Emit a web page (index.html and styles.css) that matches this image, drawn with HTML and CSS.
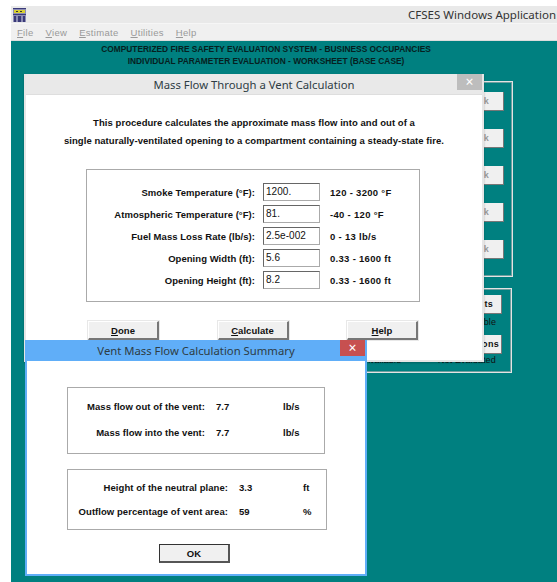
FILE: index.html
```html
<!DOCTYPE html>
<html lang="en">
<head>
<meta charset="utf-8">
<title>CFSES Windows Application</title>
<link rel="stylesheet" href="styles.css">
</head>
<body>
<div class="app">
  <header class="app-title">
    <svg class="app-icon" width="13" height="14" viewBox="0 0 13 14">
      <rect width="13" height="14" fill="#8d8db5"/>
      <rect y="0" width="13" height="1" fill="#3a3a78"/>
      <rect x="1" y="2" width="11" height="3" fill="#d8d030"/>
      <rect x="3" y="3" width="2" height="1" fill="#333"/>
      <rect x="7" y="3" width="2" height="1" fill="#333"/>
      <rect y="6" width="13" height="1" fill="#3a3a78"/>
      <rect x="1" y="8" width="2" height="6" fill="#3a3a78"/>
      <rect x="5" y="8" width="3" height="6" fill="#3a3a78"/>
      <rect x="10" y="8" width="2" height="6" fill="#3a3a78"/>
    </svg>
    <span class="app-name">CFSES Windows Application</span>
  </header>
  <nav class="menu">
    <span><u>F</u>ile</span>
    <span><u>V</u>iew</span>
    <span><u>E</u>stimate</span>
    <span><u>U</u>tilities</span>
    <span><u>H</u>elp</span>
  </nav>
  <main class="desktop">
    <div class="heading">
      <div>COMPUTERIZED FIRE SAFETY EVALUATION SYSTEM - BUSINESS OCCUPANCIES</div>
      <div>INDIVIDUAL PARAMETER EVALUATION - WORKSHEET (BASE CASE)</div>
    </div>

    <!-- worksheet panels behind the dialogs -->
    <section class="panel panel-upper">
      <div class="back-btn">Ok</div>
      <div class="back-btn">Ok</div>
      <div class="back-btn">Ok</div>
      <div class="back-btn">Ok</div>
      <div class="back-btn">Ok</div>
    </section>
    <section class="panel panel-lower">
      <div class="back-btn results-btn">Results</div>
      <div class="back-note">Available</div>
      <div class="back-btn options-btn">Options</div>
      <div class="back-status"><span>Available</span><span>Not Evaluated</span></div>
    </section>

    <!-- input dialog -->
    <section class="dialog mass">
      <div class="dlg-title">
        <span class="dlg-caption">Mass Flow Through a Vent Calculation</span>
        <span class="dlg-close">&#215;</span>
      </div>
      <div class="dlg-body">
        <p class="intro">This procedure calculates the approximate mass flow into and out of a</p>
        <p class="intro second">single naturally-ventilated opening to a compartment containing a steady-state fire.</p>
        <div class="frame inputs">
          <label>Smoke Temperature (°F):</label><span class="field">1200.</span><span>120 - 3200 °F</span>
          <label>Atmospheric Temperature (°F):</label><span class="field">81.</span><span>-40 - 120 °F</span>
          <label>Fuel Mass Loss Rate (lb/s):</label><span class="field">2.5e-002</span><span>0 - 13 lb/s</span>
          <label>Opening Width (ft):</label><span class="field">5.6</span><span>0.33 - 1600 ft</span>
          <label>Opening Height (ft):</label><span class="field">8.2</span><span>0.33 - 1600 ft</span>
        </div>
        <div class="actions">
          <button class="btn"><u>D</u>one</button>
          <button class="btn"><u>C</u>alculate</button>
          <button class="btn"><u>H</u>elp</button>
        </div>
      </div>
    </section>

    <!-- results dialog -->
    <section class="dialog summary">
      <div class="dlg-title">
        <span class="dlg-caption">Vent Mass Flow Calculation Summary</span>
        <span class="dlg-close">&#215;</span>
      </div>
      <div class="dlg-body">
        <div class="frame results flows">
          <label>Mass flow out of the vent:</label><span>7.7</span><span>lb/s</span>
          <label>Mass flow into the vent:</label><span>7.7</span><span>lb/s</span>
        </div>
        <div class="frame results plane">
          <label>Height of the neutral plane:</label><span>3.3</span><span>ft</span>
          <label>Outflow percentage of vent area:</label><span>59</span><span>%</span>
        </div>
        <button class="btn ok">OK</button>
      </div>
    </section>
  </main>
</div>
</body>
</html>
```
FILE: styles.css
```css
* { box-sizing: border-box; }

html, body { height: 100%; }

body {
  margin: 0;
  background: #fff;
  overflow: hidden;
  font-family: "Liberation Sans", Arial, sans-serif;
}

.app {
  height: 100%;
  margin-left: 11px;
  padding-top: 6px;
  display: flex;
  flex-direction: column;
}

.app-title {
  height: 18px;
  flex: none;
  display: flex;
  align-items: center;
  justify-content: space-between;
  background: #e9e9e9;
  padding: 0 0 0 2px;
  border-bottom: 1px solid #f6f6f6;
}

.app-name {
  font-family: "Noto Sans", sans-serif;
  font-size: 11.5px;
  color: #333;
  margin-right: 1px;
}

.menu {
  height: 17px;
  flex: none;
  display: flex;
  gap: 12px;
  align-items: center;
  padding-left: 6px;
  background: #f0f0f0;
  border-bottom: 1px solid #dcdcdc;
  font-size: 9.5px;
  letter-spacing: 0.3px;
  color: #999;
}

.desktop {
  position: relative;
  flex: 1;
  background: #008080;
}

.heading {
  padding-top: 3px;
  padding-right: 36px;
  text-align: center;
  font-size: 8.4px;
  line-height: 11.5px;
  font-weight: bold;
  color: #062020;
}

.panel {
  position: absolute;
  border: 1px solid #e4e4e4;
  box-shadow: inset 0 0 0 1px #6f9f9f;
  color: #111;
  font-size: 9px;
  font-weight: bold;
  letter-spacing: 0.3px;
}

.panel-upper {
  left: 300px;
  top: 40px;
  width: 202px;
  height: 196px;
  padding: 10px 8px 0 0;
  display: flex;
  flex-direction: column;
  align-items: flex-end;
  gap: 18px;
}

.panel-lower {
  left: 300px;
  top: 247px;
  width: 201px;
  height: 85px;
  padding: 6px 9px 0 0;
  display: flex;
  flex-direction: column;
  align-items: flex-end;
}

.back-btn {
  width: 60px;
  height: 19px;
  background: #f0f0f0;
  border-right: 1px solid #777;
  border-bottom: 1px solid #777;
  text-align: right;
  padding-right: 14px;
  line-height: 18px;
  color: #999;
}

.results-btn {
  color: #111;
  padding-right: 8px;
}

.options-btn {
  color: #111;
  padding-right: 2px;
}

.back-note {
  height: 21px;
  line-height: 17px;
  padding-right: 6px;
  font-weight: normal;
  font-size: 9px;
  letter-spacing: 0.1px;
}

.back-status {
  position: absolute;
  left: 52px;
  top: 66px;
  display: grid;
  grid-template-columns: 74px auto;
  font-weight: normal;
  font-size: 9px;
  letter-spacing: 0.1px;
}

.dialog {
  position: absolute;
  display: flex;
  flex-direction: column;
  background: #fff;
}

.mass {
  left: 13px;
  top: 33px;
  width: 460px;
  height: 288px;
  border: 2px solid #e6e6e6;
  border-top: 0;
  box-shadow: 0 1px 2px rgba(0, 0, 0, 0.25);
}

.summary {
  left: 14px;
  top: 299px;
  width: 342px;
  height: 236px;
  border: 2px solid #60aef8;
  border-top: 0;
}

.dlg-title {
  position: relative;
  flex: none;
  height: 21px;
  display: flex;
  align-items: center;
  justify-content: center;
  background: #e9e9e9;
  border-bottom: 1px solid #dedede;
  font-family: "Noto Sans", sans-serif;
  font-size: 11.3px;
  color: #2e3c44;
}

.summary .dlg-title {
  background: #60aef8;
  border-bottom-color: #60aef8;
}

.dlg-close {
  position: absolute;
  right: 0;
  top: 0;
  width: 25px;
  height: 16px;
  background: #bdbdbd;
  color: #fff;
  font-size: 14px;
  line-height: 15px;
  text-align: center;
}

.summary .dlg-close { background: #c75050; }

.dlg-body {
  flex: 1;
  display: flex;
  flex-direction: column;
  font-size: 9.5px;
  font-weight: bold;
  letter-spacing: 0.05px;
  color: #111;
}

.intro {
  margin: 0;
  text-align: center;
  line-height: 12px;
}

.mass .dlg-body { padding-top: 22px; }
.intro.second { margin-top: 6px; margin-bottom: 22px; }

.frame {
  border: 1px solid #aaa;
  display: grid;
  align-items: center;
}

.frame label { text-align: right; }

.inputs {
  margin-left: 60px;
  width: 334px;
  height: 133px;
  padding: 13px 0 0;
  grid-template-columns: 168px 57px auto;
  grid-auto-rows: 18px;
  row-gap: 4px;
  column-gap: 8px;
  align-content: start;
}

/* range column sits a little wider than the entry boxes */
.inputs span:nth-child(3n) {
  margin-left: 2px;
  font-size: 9.5px;
  letter-spacing: 0.3px;
}

.field {
  height: 18px;
  border: 1px solid #666;
  border-right-color: #aaa;
  border-bottom-color: #aaa;
  font-weight: normal;
  font-size: 10px;
  line-height: 16px;
  padding-left: 2px;
}

.actions {
  margin: 19px 0 0 62px;
  width: 330px;
  display: flex;
  justify-content: space-between;
}

.btn {
  width: 71px;
  height: 19px;
  padding: 0;
  background: #f0f0f0;
  border: 0;
  border-right: 2px solid #777;
  border-bottom: 2px solid #777;
  border-left: 1px solid #fff;
  border-top: 1px solid #fff;
  box-shadow: 0 0 0 1px #e8e8e8;
  font: bold 9.5px "Liberation Sans", Arial, sans-serif;
  letter-spacing: 0.05px;
  color: #111;
}

.results { column-gap: 11px; }

.flows {
  margin: 26px 0 0 40px;
  width: 258px;
  height: 67px;
  padding-bottom: 2px;
  grid-template-columns: 137px 56px auto;
  align-content: center;
  row-gap: 15px;
}

.plane {
  margin: 15px 0 0 40px;
  width: 260px;
  height: 61px;
  padding-bottom: 1px;
  grid-template-columns: 160px 53px auto;
  align-content: center;
  row-gap: 13px;
}

.btn.ok {
  margin: 14px 0 0 132px;
  border: 1px solid #333;
  border-right: 2px solid #555;
  border-bottom: 2px solid #555;
  box-shadow: none;
}
```
